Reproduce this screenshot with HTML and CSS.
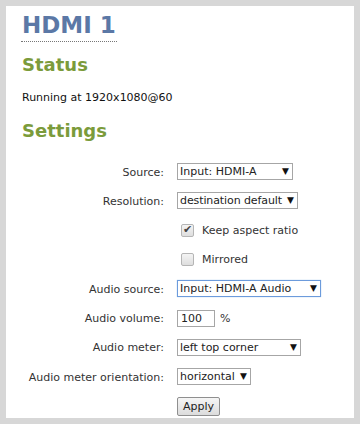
FILE: index.html
```html
<!DOCTYPE html>
<html lang="en">
<head>
    <meta charset="UTF-8">
    <meta name="viewport" content="width=device-width, initial-scale=1.0">
    <title>HDMI 1</title>
    <link rel="stylesheet" href="styles.css">
</head>
<body>
    <div class="panel">
        <h1 class="title">HDMI 1</h1>
        <h2>Status</h2>
        <p class="status">Running at 1920x1080@60</p>
        <h2>Settings</h2>
        <form class="settings">
            <label for="source">Source:</label>
            <span class="select w-source"><select id="source"><option>Input: HDMI-A</option></select></span>

            <label for="resolution">Resolution:</label>
            <span class="select w-res"><select id="resolution"><option>destination default</option></select></span>

            <span></span>
            <label class="check"><input type="checkbox" checked> Keep aspect ratio</label>

            <span></span>
            <label class="check"><input type="checkbox"> Mirrored</label>

            <label for="audio-source">Audio source:</label>
            <span class="select w-audio focused"><select id="audio-source"><option>Input: HDMI-A Audio</option></select></span>

            <label for="volume">Audio volume:</label>
            <span class="volume"><input type="text" id="volume" value="100"> %</span>

            <label for="meter">Audio meter:</label>
            <span class="select w-meter"><select id="meter"><option>left top corner</option></select></span>

            <label for="orientation">Audio meter orientation:</label>
            <span class="select w-orient"><select id="orientation"><option>horizontal</option></select></span>

            <span></span>
            <span><button type="button">Apply</button></span>
        </form>
    </div>
</body>
</html>
```

FILE: styles.css
```css
body {
    margin: 0;
    font-family: "DejaVu Sans", Verdana, sans-serif;
    font-size: 11px;
    color: #222;
    background-color: #fff;
}
.panel {
    width: 333px;
    height: 406px;
    border: 6px solid #d7d7d7;
    padding: 6px 0 0 15px;
}
.title {
    display: inline-block;
    margin: 0;
    padding: 0 1px 3px 1px;
    font-size: 23px;
    color: #5b78a6;
    border-bottom: 1px dotted #777;
    line-height: 26px;
}
h2 {
    margin: 12px 0 0 1px;
    font-size: 18px;
    color: #7b9b3b;
    line-height: 22px;
}
.status {
    margin: 15px 0 16px 1px;
    color: #111;
}
.settings {
    display: grid;
    grid-template-columns: 143px auto;
    column-gap: 13px;
    grid-auto-rows: 18px;
    row-gap: 11.3px;
    margin-top: 21px;
}
.settings > label {
    text-align: right;
    align-self: center;
    color: #333;
}
.select {
    position: relative;
    display: inline-block;
    height: 17px;
}
.select select {
    appearance: none;
    -webkit-appearance: none;
    width: 100%;
    height: 17px;
    margin: 0;
    padding: 0 0 0 2px;
    border: 1px solid #a6a6a6;
    border-radius: 0;
    background: #fff;
    font-family: inherit;
    font-size: 11px;
    color: #222;
}
.select::after {
    content: "\25BC";
    position: absolute;
    right: 4px;
    top: 3px;
    font-size: 9px;
    color: #111;
    pointer-events: none;
}
.focused select {
    border-color: #6c9bdc;
    box-shadow: 0 0 1px #9cc0ee;
}
.w-source { width: 116px; }
.w-res { width: 121px; }
.w-res select { letter-spacing: -0.1px; }
.w-audio { width: 144px; }
.w-meter { width: 124px; }
.w-orient { width: 74px; }
.check {
    display: flex;
    align-items: center;
    gap: 8px;
    margin-left: 4px;
    font-size: 11px;
    color: #555;
}
.check input {
    appearance: none;
    -webkit-appearance: none;
    width: 13px;
    height: 13px;
    margin: 0;
    border: 1px solid #b5b5b5;
    border-radius: 2px;
    background: linear-gradient(#f4f4f4, #dedede);
    position: relative;
}
.check input:checked::after {
    content: "\2714";
    position: absolute;
    left: 1px;
    top: -2px;
    font-size: 11px;
    color: #444;
}
.volume {
    display: flex;
    align-items: center;
    gap: 5px;
    color: #333;
}
.volume input {
    width: 30px;
    height: 15px;
    margin: 0;
    padding: 0 3px;
    border: 1px solid #a6a6a6;
    font-family: inherit;
    font-size: 11px;
    color: #222;
}
button {
    height: 19px;
    padding: 0 5px;
    border: 1px solid #8f8f8f;
    border-radius: 2px;
    background: linear-gradient(#f5f5f5, #dcdcdc);
    font-family: inherit;
    font-size: 11px;
    color: #222;
}
```
